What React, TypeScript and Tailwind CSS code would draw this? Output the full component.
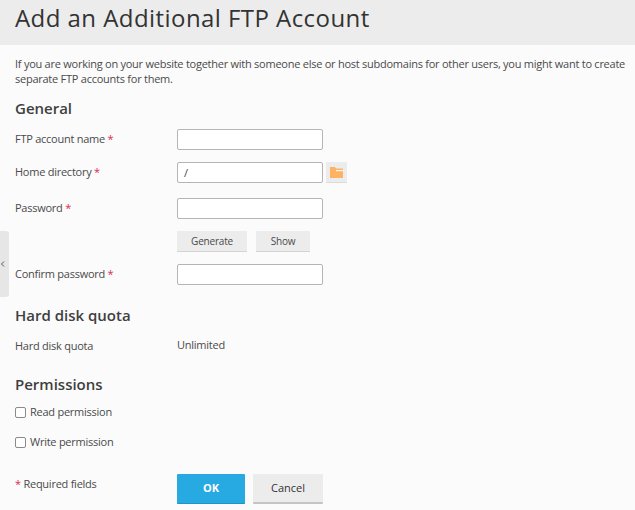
import React from "react";

const Req = () => <span className="text-[#e0284f]"> *</span>;

function Row({ label, required, children, className, labelClass = "" }: { label?: string; required?: boolean; children?: React.ReactNode; className: string; labelClass?: string }) {
  return (
    <div className={"flex items-center " + className}>
      <div className={"w-[162px] shrink-0 text-[11px] leading-[16px] tracking-[-0.25px] " + labelClass}>
        {label}
        {required && <Req />}
      </div>
      {children}
    </div>
  );
}

const Field = ({ value }: { value?: string }) => (
  <div className="w-[146px] h-[21px] bg-white border border-[#b5b5b5] rounded-[2px] pl-[6px] text-[11px] leading-[19px]">{value}</div>
);

const SmallBtn = ({ children, className }: { children: React.ReactNode; className: string }) => (
  <div className={"h-[21px] bg-[#ececec] border-b border-[#d4d4d4] flex items-center justify-center text-[10px] tracking-[-0.2px] " + className}>{children}</div>
);

const H = ({ children, className }: { children: React.ReactNode; className: string }) => (
  <h2 className={"text-[15px] leading-[20px] font-semibold text-[#3f3f3f] " + className}>{children}</h2>
);

const Check = ({ label, className }: { label: string; className: string }) => (
  <div className={"flex items-center text-[11px] leading-[16px] tracking-[-0.25px] " + className}>
    <span className="w-[11px] h-[11px] border border-[#8a8a8a] rounded-[2px] bg-white mr-[4px]" />
    {label}
  </div>
);

export default function App() {
  return (
    <div className="relative w-[635px] h-[510px] overflow-hidden bg-[#fbfbfb] text-[#4a4a4a] font-['Open_Sans',sans-serif]">
      <div className="h-[45px] bg-[#ececec] pl-[15px] text-[24px] leading-[36px] tracking-[0.44px] text-[#333]">Add an Additional FTP Account</div>
      <div className="absolute left-0 top-[231px] w-[9px] h-[66px] bg-[#e6e6e6] rounded-r-[3px] flex items-center">
        <svg width="6" height="8" viewBox="0 0 6 8">
          <path d="M4 1.5 1.5 4 4 6.5" fill="none" stroke="#555" strokeWidth="1" />
        </svg>
      </div>
      <div className="px-[15px]">
        <p className="mt-[11px] -mr-[10px] text-[11px] leading-[15px] tracking-[-0.25px]">
          If you are working on your website together with someone else or host subdomains for other users, you might want to create separate FTP accounts for them.
        </p>
        <H className="mt-[12px]">General</H>
        <Row label="FTP account name" required className="mt-[11px]" labelClass="-mt-[2px]"><Field /></Row>
        <Row label="Home directory" required className="mt-[12px]" labelClass="-mt-[2px]">
          <Field value="/" />
          <div className="ml-[3px] w-[21px] h-[21px] bg-[#ececec] border-b border-[#dcdcdc] flex items-center justify-center">
            <svg width="13" height="11" viewBox="0 0 13 11">
              <path d="M0 0h5l1 1.5h7v9.5h-13z" fill="#fdb264" />
              <path d="M6 3h7v1.2h-7z" fill="#fff4e6" />
            </svg>
          </div>
        </Row>
        <Row label="Password" required className="mt-[15px]" labelClass="-mt-[2px]"><Field /></Row>
        <Row className="mt-[12px]">
          <SmallBtn className="w-[70px]">Generate</SmallBtn>
          <SmallBtn className="w-[54px] ml-[9px]">Show</SmallBtn>
        </Row>
        <Row label="Confirm password" required className="mt-[12px]" labelClass="-mt-[2px]"><Field /></Row>
        <H className="mt-[20px]">Hard disk quota</H>
        <Row label="Hard disk quota" className="mt-[13px]">
          <div className="text-[11px] leading-[16px] tracking-[-0.25px] -mt-[2px]">Unlimited</div>
        </Row>
        <H className="mt-[20px]">Permissions</H>
        <Check label="Read permission" className="mt-[10px]" />
        <Check label="Write permission" className="mt-[14px]" />
        <div className="flex mt-[24px]">
          <div className="w-[162px] shrink-0 text-[11px] leading-[16px] tracking-[-0.25px] mt-[2px]">
            <span className="text-[#e0284f]">*</span> Required fields
          </div>
          <div className="w-[68px] h-[30px] bg-[#27a9e1] border-b border-[#1f94c7] rounded-[1px] text-white font-bold text-[11px] flex items-center justify-center">OK</div>
          <div className="w-[70px] h-[30px] ml-[8px] bg-[#ececec] border-b-2 border-[#c4c4c4] rounded-[1px] text-[#333] text-[11px] flex items-center justify-center">Cancel</div>
        </div>
      </div>
    </div>
  );
}
